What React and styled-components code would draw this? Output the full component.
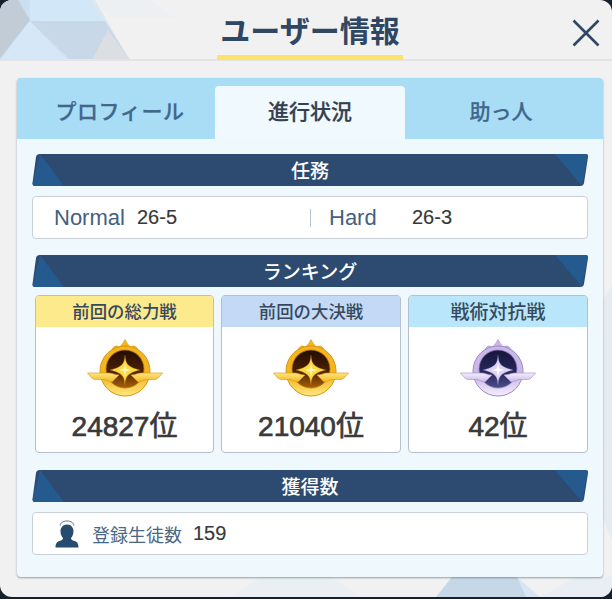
import styled, { createGlobalStyle } from "styled-components";

const GlobalStyle = createGlobalStyle`
  html, body {
    margin: 0;
    background: #16212e;
  }
  * {
    box-sizing: border-box;
  }
`;

const FONT = `"Liberation Sans", "Noto Sans CJK JP", sans-serif`;

const Modal = styled.div`
  position: relative;
  width: 612px;
  height: 597px;
  padding-top: 1px;
  border-radius: 12px;
  overflow: hidden;
  background: #f1f1f2;
  font-family: ${FONT};
`;

const Decor = styled.svg`
  position: absolute;
  left: 0;
  top: 0;
  width: 612px;
  height: 597px;
`;

const Header = styled.header`
  position: relative;
  height: 60px;
  display: flex;
  justify-content: center;
  border-bottom: 2px solid #e4e4e5;
`;

const Title = styled.h1`
  margin: 0 0 0 8px;
  width: 186px;
  height: 59px;
  padding-top: 10px;
  border-bottom: 5px solid #fbe36c;
  text-align: center;
  font-size: 30px;
  line-height: 42px;
  font-weight: 700;
  color: #2f4763;
`;

const CloseButton = styled.button`
  position: absolute;
  left: 572px;
  top: 18px;
  width: 28px;
  height: 28px;
  padding: 0;
  border: 0;
  background: none;
  display: flex;
`;

const Panel = styled.main`
  position: relative;
  margin: 17px 9px 0 17px;
  height: 499px;
  background: #eff8fd;
  border-radius: 4px;
  box-shadow: 0 1px 2px rgba(70, 90, 110, 0.55);
  overflow: hidden;
`;

const Tabs = styled.nav`
  display: grid;
  grid-template-columns: 198px 190px 198px;
  height: 61px;
  padding-top: 8px;
  background: #a9dcf5;
`;

const Tab = styled.div`
  display: flex;
  align-items: center;
  justify-content: center;
  padding-bottom: 5px;
  padding-left: ${(p) => p.$left || 0}px;
  padding-right: ${(p) => p.$right || 0}px;
  border-radius: 4px 4px 0 0;
  background: ${(p) => (p.$active ? "#f0f9fe" : "transparent")};
  color: ${(p) => (p.$active ? "#33404f" : "#41678d")};
  font-size: 21px;
  font-weight: 500;
  letter-spacing: ${(p) => p.$spacing || 0}px;
  -webkit-text-stroke: 0.25px currentColor;
`;

const Content = styled.div`
  padding: 15px 15px 0;
  display: flex;
  flex-direction: column;
`;

const SectionBar = styled.h2`
  position: relative;
  margin: 0;
  height: 32px;
  padding-bottom: 2px;
  background: #2d4a71;
  clip-path: path("M8 0 H553 Q556.5 0 556 3 L552 29 Q551.5 32 548 32 H3 Q0 32 0.5 29 L4 3 Q4.5 0 8 0 Z");
  display: flex;
  align-items: center;
  justify-content: center;
  color: #fff;
  font-size: 19px;
  font-weight: 500;

  &::before {
    content: "";
    position: absolute;
    inset: 0 auto 0 0;
    width: 32px;
    background: #255a8e;
    clip-path: polygon(8px 0, 100% 100%, 0 100%);
  }

  &::after {
    content: "";
    position: absolute;
    inset: 0 0 0 auto;
    width: 33px;
    background: #255a8e;
    clip-path: polygon(0 0, 100% 0, 27px 100%);
  }
`;

const InfoRow = styled.div`
  height: 43px;
  margin-top: 10px;
  background: #fff;
  border: 1px solid #c9d0d8;
  border-radius: 4px;
  display: flex;
  align-items: center;
  font-size: 20px;
  margin-bottom: ${(p) => p.$gap || 0}px;
`;

const Stage = styled.div`
  display: flex;
  align-items: center;
  width: ${(p) => p.$width}px;
  padding-left: ${(p) => p.$pad}px;
`;

const StageName = styled.span`
  width: 83px;
  color: #43617f;
  font-size: 22px;
`;

const Value = styled.span`
  color: #383838;
  -webkit-text-stroke: 0.15px currentColor;
`;

const Divider = styled.span`
  width: 1px;
  height: 18px;
  background: #b8c4ce;
`;

const Cards = styled.div`
  display: grid;
  grid-template-columns: 179px 180px 180px;
  gap: 7px;
  margin: 8px 0 17px 3px;
`;

const Card = styled.section`
  height: 158px;
  background: #fff;
  border: 1px solid #b5c0cc;
  border-radius: 4px;
  overflow: hidden;
  display: flex;
  flex-direction: column;
  align-items: center;
`;

const CardHead = styled.div`
  align-self: stretch;
  height: 31px;
  padding-bottom: 3px;
  background: ${(p) => p.$color};
  color: #36495d;
  display: flex;
  align-items: center;
  justify-content: center;
  font-size: ${(p) => p.$size || 17.4}px;
  font-weight: 500;
`;

const MedalIcon = styled.svg`
  width: 76px;
  height: 58px;
  margin-top: 12px;
`;

const Rank = styled.div`
  margin-top: 12px;
  color: #3a3a3a;
  font-size: 28px;
  line-height: 36px;
  font-weight: 400;
  -webkit-text-stroke: 0.7px currentColor;
`;

const StudentIcon = styled.svg`
  width: 24px;
  height: 28px;
  margin-left: 22px;
`;

const StudentLabel = styled.span`
  margin: 0 11px 0 13px;
  color: #4a6785;
  font-size: 18px;
`;

const GOLD = {
  light: "#ffe680",
  mid: "#f3b61f",
  dark: "#b8760c",
  rim: "#d8950f",
  coreTop: "#240d02",
  coreMid: "#4a2004",
  coreBottom: "#a85f08",
  star: "#ffd93f",
  starCore: "#fff7b8",
};

const SILVER = {
  light: "#f5effc",
  mid: "#c9b8e8",
  dark: "#8f7bbd",
  rim: "#9d89c9",
  coreTop: "#17163c",
  coreMid: "#26265a",
  coreBottom: "#4c4c88",
  star: "#dcd3f6",
  starCore: "#ffffff",
};

const Medal = ({ palette, uid }) => (
  <MedalIcon viewBox="0 0 76 58">
    <defs>
      <linearGradient id={`${uid}-ring`} x1="0" y1="0" x2="0" y2="1">
        <stop offset="0" stopColor={palette.mid} />
        <stop offset="0.6" stopColor={palette.mid} />
        <stop offset="1" stopColor={palette.light} />
      </linearGradient>
      <linearGradient id={`${uid}-core`} x1="0" y1="0" x2="0" y2="1">
        <stop offset="0" stopColor={palette.coreTop} />
        <stop offset="0.55" stopColor={palette.coreMid} />
        <stop offset="1" stopColor={palette.coreBottom} />
      </linearGradient>
      <linearGradient id={`${uid}-wing`} x1="0" y1="0" x2="0" y2="1">
        <stop offset="0" stopColor={palette.light} />
        <stop offset="1" stopColor={palette.mid} />
      </linearGradient>
    </defs>
    <path d="M25 11 C26 8 28 6.5 30.5 7 C31 8 32 8.5 33 7.5 C35 6 36.5 3 38 0.5 C39.5 3 41 6 43 7.5 C44 8.5 45 8 45.5 7 C48 6.5 50 8 51 11 L44 15 H32 Z" fill={palette.mid} stroke={palette.rim} strokeWidth="0.6" />
    <circle cx="38" cy="32" r="25" fill={`url(#${uid}-ring)`} stroke={palette.rim} strokeWidth="1" />
    <circle cx="38" cy="30" r="19" fill={`url(#${uid}-core)`} stroke={palette.dark} strokeWidth="0.8" />
    <path d="M0.5 34 H22 C25 34 28 36 32 36 L25 43 C22 43 20 41 17 40.5 H8 C5 40 3 37 0.5 34 Z" fill={`url(#${uid}-wing)`} stroke={palette.rim} strokeWidth="0.6" />
    <path d="M75.5 34 H54 C51 34 48 36 44 36 L51 43 C54 43 56 41 59 40.5 H68 C71 40 73 37 75.5 34 Z" fill={`url(#${uid}-wing)`} stroke={palette.rim} strokeWidth="0.6" />
    <path d="M38 16 C38.6 24 40 28 53 31 C40 34 38.6 38 38 46 C37.4 38 36 34 23 31 C36 28 37.4 24 38 16 Z" fill={palette.star} stroke={palette.dark} strokeWidth="0.3" />
    <path d="M38 24 L39.2 29.8 L44.5 31 L39.2 32.2 L38 38 L36.8 32.2 L31.5 31 L36.8 29.8 Z" fill={palette.starCore} />
  </MedalIcon>
);

const Student = () => (
  <StudentIcon viewBox="0 0 24 28">
    <path d="M5.2 5.5 C5.2 3 8 1 12 1 C16 1 18.8 3 18.8 5.5" fill="none" stroke="#56718c" strokeWidth="1" />
    <path d="M12 4.5 C16.5 4.5 18.5 8 18.5 11 C18.5 14 17.5 16.5 16 18 C16 19.5 17 20.2 19.5 21 C22 21.8 23.5 23.5 23.5 27.5 H0.5 C0.5 23.5 2 21.8 4.5 21 C7 20.2 8 19.5 8 18 C6.5 16.5 5.5 14 5.5 11 C5.5 8 7.5 4.5 12 4.5 Z" fill="#274a70" />
  </StudentIcon>
);

const BackgroundShapes = () => (
  <Decor viewBox="0 0 612 597">
    <defs>
      <linearGradient id="fade" x1="0" y1="0" x2="1" y2="0">
        <stop offset="0" stopColor="#c6dcf0" />
        <stop offset="1" stopColor="#e4ebf1" />
      </linearGradient>
    </defs>
    <polygon points="0,0 95,0 130,60 0,60" fill="url(#fade)" />
    <polygon points="0,0 18,0 30,20 0,58" fill="#c2ccd6" />
    <polygon points="30,0 90,0 105,21 30,21" fill="#d2e7f8" />
    <polygon points="30,21 105,21 130,60 70,60" fill="#c9d8e8" />
    <polygon points="108,30 130,60 92,60" fill="#dbdfe3" />
    <polygon points="0,60 30,21 66,60" fill="#d6e8f7" />
    <polygon points="95,0 150,0 175,18 110,18" fill="#edf0f2" />
    <polygon points="230,597 260,577 330,577 360,597" fill="#eaeff3" />
    <polygon points="436,597 452,577 517,577 528,597" fill="#c6d8e8" />
    <polygon points="517,577 526,597 540,597" fill="#d8e5f5" />
    <polygon points="540,597 576,577 612,577 612,597" fill="#e8eef3" />
    <polygon points="603,300 612,285 612,540 603,520" fill="#e6ebf0" />
  </Decor>
);

export default function App() {
  return (
    <>
      <GlobalStyle />
      <Modal>
        <BackgroundShapes />
        <Header>
          <Title>ユーザー情報</Title>
          <CloseButton aria-label="閉じる">
            <svg width="28" height="28" viewBox="0 0 28 28">
              <path d="M1.5 1.5 L26.5 26.5 M26.5 1.5 L1.5 26.5" stroke="#2f4763" strokeWidth="2.6" fill="none" />
            </svg>
          </CloseButton>
        </Header>
        <Panel>
          <Tabs>
            <Tab $left={8} $spacing={0.6}>プロフィール</Tab>
            <Tab $active>進行状況</Tab>
            <Tab $right={6}>助っ人</Tab>
          </Tabs>
          <Content>
            <SectionBar>任務</SectionBar>
            <InfoRow $gap={16}>
              <Stage $width={277} $pad={21}>
                <StageName>Normal</StageName>
                <Value>26-5</Value>
              </Stage>
              <Divider />
              <Stage $width={200} $pad={18}>
                <StageName>Hard</StageName>
                <Value>26-3</Value>
              </Stage>
            </InfoRow>
            <SectionBar>ランキング</SectionBar>
            <Cards>
              <Card>
                <CardHead $color="#fdea8d">前回の総力戦</CardHead>
                <Medal palette={GOLD} uid="m1" />
                <Rank>24827位</Rank>
              </Card>
              <Card>
                <CardHead $color="#c3d9f5">前回の大決戦</CardHead>
                <Medal palette={GOLD} uid="m2" />
                <Rank>21040位</Rank>
              </Card>
              <Card>
                <CardHead $color="#b9e6fb" $size={19}>戦術対抗戦</CardHead>
                <Medal palette={SILVER} uid="m3" />
                <Rank>42位</Rank>
              </Card>
            </Cards>
            <SectionBar>獲得数</SectionBar>
            <InfoRow>
              <Student />
              <StudentLabel>登録生徒数</StudentLabel>
              <Value>159</Value>
            </InfoRow>
          </Content>
        </Panel>
      </Modal>
    </>
  );
}
